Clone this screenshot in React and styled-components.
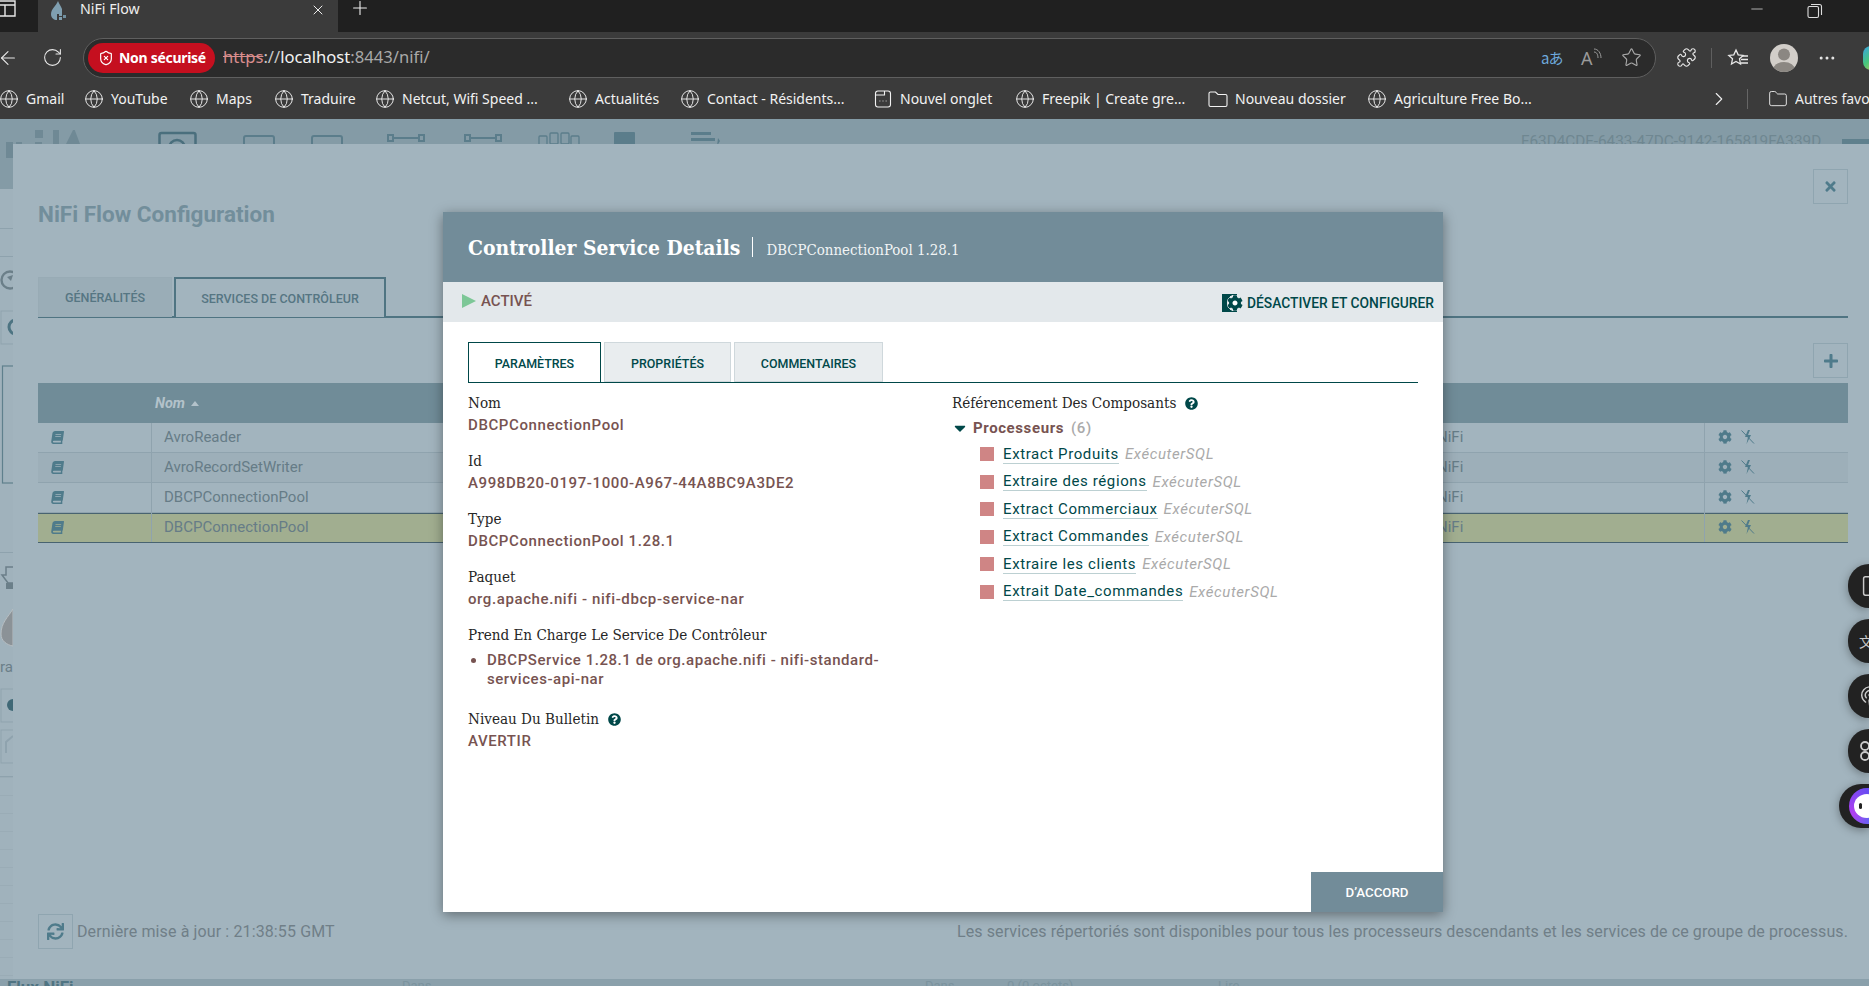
import React from 'react';
import styled, { createGlobalStyle } from 'styled-components';
import { Globe, RotateCw, ArrowLeft, X, Plus, ShieldX, Star, Puzzle, MoreHorizontal, ChevronRight, Folder, Minus, Smartphone, Podcast } from 'lucide-react';
import { FaBook, FaCog, FaPlus, FaTimes, FaSync, FaQuestionCircle, FaCaretDown } from 'react-icons/fa';

const Global = createGlobalStyle`
  html, body { margin: 0; padding: 0; height: 100%; overflow: hidden; background: #202020; }
  #root { height: 100%; }
  * { box-sizing: border-box; }
`;
const UI = `"Noto Sans", "Open Sans", sans-serif`;
const RB = `Roboto, "Liberation Sans", sans-serif`;
const SLAB = `"DejaVu Serif Condensed", "DejaVu Serif", serif`;

const Screen = styled.div`width:1869px;height:986px;display:flex;flex-direction:column;overflow:hidden;position:relative;`;

/* browser chrome */
const TabStrip = styled.div`height:32px;background:#202020;display:flex;align-items:flex-start;flex:none;overflow:hidden;`;
const WinSlot = styled.div`width:38px;height:32px;color:#e8e8e8;`;
const Tab = styled.div`width:300px;height:32px;background:#3b3b3b;display:flex;align-items:center;padding:0 12px;color:#fff;font:14.2px ${UI};position:relative;`;
const TabTitle = styled.span`margin:-15px 0 0 13px;flex:1;color:#eee;`;
const TabClose = styled.span`margin:-12px 0 0 0;display:flex;color:#eee;`;
const NewTab = styled.span`margin:-3px 0 0 11px;display:flex;color:#eee;`;
const WinControls = styled.div`margin-left:auto;margin-right:-12px;display:flex;align-items:flex-start;color:#ddd;`;
const WinBtn = styled.span`display:flex;margin-left:${p => p.$ml}px;`;

const Toolbar = styled.div`height:46px;background:#3b3b3b;display:flex;align-items:center;flex:none;padding-top:5px;`;
const NavBtn = styled.span`display:flex;flex:none;color:#e8e8e8;margin-left:${p => p.$ml}px;`;
const AddressBar = styled.div`width:1573px;flex:none;height:40px;margin-left:20px;border:1.5px solid #5f5f5f;border-radius:20px;background:#2b2b2b;display:flex;align-items:center;padding:0 13px 0 4px;`;
const Badge = styled.div`width:127px;height:30px;border-radius:15px;background:#c50f1f;color:#fff;display:flex;align-items:center;gap:5px;padding-left:10px;font:700 14px ${UI};letter-spacing:-.3px;white-space:nowrap;`;
const Url = styled.div`margin:-2px 0 0 8px;font:16.6px ${UI};color:#a9a9a9;flex:1;white-space:nowrap;`;
const UrlHttps = styled.span`color:#d98d8d;text-decoration:line-through;`;
const UrlHost = styled.span`color:#f2f2f2;`;
const UrlSep = styled.span`color:#c8c8c8;`;
const FieldIcons = styled.div`display:flex;align-items:center;gap:18px;color:#a8a8a8;`;
const Translate = styled.span`width:22px;color:#6ea9dc;font:15px "Noto Sans CJK JP", "Noto Sans", sans-serif;white-space:nowrap;letter-spacing:-1px;`;
const ReadAloud = styled.span`width:22px;height:22px;display:flex;align-items:flex-end;position:relative;font:18px ${UI};line-height:22px;color:#9a9a9a;`;
const ReadArc = styled.svg`position:absolute;right:0;top:1px;`;
const VSep = styled.span`width:1px;height:20px;flex:none;background:#5f5f5f;margin-left:${p => p.$ml}px;`;
const Avatar = styled.span`width:28px;height:28px;flex:none;border-radius:50%;background:#d2cec9;display:flex;margin-left:21px;overflow:hidden;`;
const Copilot = styled.span`width:22px;height:24px;flex:none;margin-left:26px;border-radius:8px 0 0 8px;background:linear-gradient(135deg,#38a3e8 0%,#48c87a 45%,#f2c14e 90%);`;

const Bookmarks = styled.div`height:41px;background:#3b3b3b;display:flex;align-items:center;flex:none;padding-left:0;margin-left:-1px;`;
const Bookmark = styled.div`width:${p => p.$w}px;flex:none;display:flex;align-items:center;gap:7px;color:#f2f2f2;font:14px ${UI};white-space:nowrap;`;
const BookEnd = styled.div`margin-left:auto;display:flex;align-items:center;color:#eee;`;
const Chevron = styled.span`display:flex;margin-right:17px;`;
const BarSep = styled.span`width:1px;height:20px;background:#666;margin-right:20px;`;
const FavText = styled.span`font:14px ${UI};margin-left:7px;white-space:nowrap;width:74px;overflow:hidden;`;

/* nifi page behind */
const Page = styled.div`flex:1;position:relative;background:#a0b2bc;overflow:hidden;display:flex;flex-direction:column;`;
const NifiHeader = styled.div`height:70px;background:#849ba6;display:flex;align-items:flex-start;flex:none;padding-top:11px;color:#5b7d8b;position:relative;`;
const HeadIcon = styled.span`margin-left:${p => p.$ml}px;display:flex;`;
const FlowId = styled.span`position:absolute;left:1521px;top:13px;font:15.3px Roboto, sans-serif;color:#6f8791;white-space:nowrap;`;
const UserTab = styled.span`position:absolute;right:0;top:20px;width:27px;height:10px;background:#5f808d;`;
const SideStack = styled.div`width:13px;flex:1;display:flex;flex-direction:column;color:#4d7482;`;
const SidePiece = styled.div`height:${p => p.$h}px;flex:none;background:${p => p.$bg || 'transparent'};border-bottom:${p => p.$line ? '1px solid #8ea2ad' : 'none'};overflow:hidden;display:flex;align-items:center;font:15px ${RB};color:#6b7f89;`;
const SideGrid = styled.div`flex:1;background-image:linear-gradient(#9aacb6 1px,transparent 1px);background-size:100% 18px;`;
const BottomBar = styled.div`height:7px;background:#8aa0ab;flex:none;padding-left:7px;font:700 17px/17px ${RB};color:#4f7482;overflow:hidden;white-space:nowrap;display:flex;`;
const BarStat = styled.span`position:absolute;bottom:-8px;left:${p => p.$x}px;font:13px/16px ${RB};color:#7b939e;`;

/* NiFi configuration shell */
const Shell = styled.div`position:absolute;left:13px;top:25px;right:0;bottom:7px;background:#a2b4be;padding:0 21px 30px 25px;display:flex;flex-direction:column;font-family:${RB};`;
const SquareBtn = styled.button`width:35px;height:35px;padding:0;background:transparent;border:1px solid #8fa5b0;color:#4f7b8b;display:flex;align-items:center;justify-content:center;flex:none;`;
const CloseBtn = styled(SquareBtn)`position:absolute;top:25px;right:21px;`;
const ShellTitle = styled.h1`margin:57px 0 0;font:700 22.5px/26px ${RB};color:#728e9b;`;
const ShellTabs = styled.div`margin-top:50px;height:41px;display:flex;gap:2px;border-bottom:2px solid #4f7482;flex:none;`;
const ShellTab = styled.div`width:${p => p.$w}px;height:40px;margin-bottom:-1px;padding-top:1px;display:flex;align-items:center;justify-content:center;font:500 12.5px ${RB};color:#567683;border:${p => p.$active ? '2px solid #4f7482' : '1px solid #98abb5'};border-bottom:${p => p.$active ? 'none' : '1px solid #98abb5'};background:${p => p.$active ? '#a2b4be' : '#9aadb7'};`;
const AddBtn = styled(SquareBtn)`align-self:flex-end;margin-top:25px;`;
const Table = styled.div`margin-top:5px;display:flex;flex-direction:column;flex:none;`;
const THead = styled.div`height:40px;background:#708c98;padding-left:117px;display:flex;align-items:center;font:italic 700 14.5px ${RB};color:#b3c2ca;gap:6px;`;
const SortUp = styled.span`width:0;height:0;border-left:4.5px solid transparent;border-right:4.5px solid transparent;border-bottom:5px solid #b3c2ca;`;
const TRow = styled.div`height:30px;display:grid;grid-template-columns:113px 1fr 280px 144px;background:${p => p.$sel ? '#a1ae90' : p.$alt ? '#9dafb9' : '#a2b4be'};border-bottom:1px solid ${p => p.$sel ? '#486370' : '#8fa3ae'};${p => p.$sel ? 'box-shadow:inset 0 1px 0 #486370;' : ''}`;
const TCell = styled.div`display:flex;align-items:center;padding:0 0 1px ${p => p.$pl ?? 12}px;gap:8px;font-size:15px;color:#667c87;border-left:${p => p.$rule ? '1px solid #8fa3ae' : 'none'};`;
const ShellFoot = styled.div`margin-top:auto;display:flex;align-items:center;`;
const RefreshLabel = styled.span`margin-left:4px;font-size:16px;color:#707f88;letter-spacing:.12px;`;
const FootNote = styled.span`margin-left:auto;font-size:16px;color:#707f88;letter-spacing:.1px;`;

/* modal */
const Modal = styled.div`position:absolute;left:443px;top:93px;width:1000px;height:700px;background:#fff;box-shadow:0 3px 12px rgba(0,0,0,.4);display:flex;flex-direction:column;font-family:${RB};`;
const ModalHead = styled.div`height:70px;background:#728c99;display:flex;align-items:center;padding-left:25px;color:#fff;flex:none;`;
const ModalTitle = styled.h2`margin:0;font:700 20.9px ${SLAB};padding-right:12px;`;
const HeadRule = styled.span`width:1px;height:20px;background:#fff;`;
const ModalSub = styled.span`margin-left:13px;font:14.9px ${SLAB};padding-top:6px;color:#f1f4f5;`;
const StatusBar = styled.div`height:40px;background:#e3e8eb;display:flex;justify-content:space-between;padding:0 9px 0 19px;flex:none;`;
const StatusLeft = styled.div`display:flex;align-items:center;gap:5px;font:500 15px ${RB};color:#775351;padding-bottom:2px;`;
const PlayMark = styled.span`width:0;height:0;border-left:14px solid #7dc797;border-top:7.5px solid transparent;border-bottom:7.5px solid transparent;`;
const StatusRight = styled.div`display:flex;align-items:center;gap:4px;font:500 13.8px ${RB};color:#004849;padding-top:1px;`;
const GearBox = styled.span`width:21px;height:18px;display:flex;align-items:center;justify-content:flex-end;color:#004849;background:radial-gradient(circle at 13px 9px,#fff 3.5px,#e3e8eb 4px,#e3e8eb 8px,transparent 8.5px),linear-gradient(#004849,#004849) left/15px 100% no-repeat;`;
const ModalBody = styled.div`flex:1;padding:20px 25px 0;display:flex;flex-direction:column;`;
const Tabs = styled.div`height:41px;display:flex;gap:3px;border-bottom:1px solid #004849;flex:none;`;
const TabBtn = styled.div`width:${p => p.$w}px;height:40px;padding-top:2px;display:flex;align-items:center;justify-content:center;font:500 12.45px ${RB};color:#004849;background:${p => p.$active ? '#fff' : '#e9edef'};border:${p => p.$active ? '1px solid #004849' : '1px solid #cfd8dc'};border-bottom:${p => p.$active ? '0' : '1px solid #cfd8dc'};`;
const Cols = styled.div`display:flex;padding-top:9px;`;
const LeftCol = styled.div`width:484px;flex:none;`;
const RightCol = styled.div`flex:1;`;
const Field = styled.div`margin-bottom:${p => p.$mb ?? 14}px;`;
const Label = styled.div`font:15.1px/22px ${SLAB};color:#262626;display:flex;align-items:center;gap:9px;white-space:nowrap;`;
const Value = styled.div`font:500 15px/22px ${RB};color:#775351;letter-spacing:.6px;`;
const Bullets = styled.ul`margin:5px 0 0;padding:0 0 0 19px;width:440px;font:500 15px/19px ${RB};color:#775351;letter-spacing:.55px;`;
const Help = styled.span`display:flex;color:#004849;`;
const Proc = styled.div`margin-top:3px;height:22px;display:flex;align-items:center;font:700 15px ${RB};color:#775351;letter-spacing:.6px;`;
const Caret = styled.span`display:flex;width:22px;color:#004849;margin-left:-1px;`;
const ProcCount = styled.span`margin-left:7px;font-weight:500;color:#aaa;`;
const RefList = styled.div`margin:4px 0 0 28px;display:flex;flex-direction:column;gap:5.6px;`;
const RefRow = styled.div`height:22px;display:flex;align-items:center;font-size:15px;letter-spacing:.6px;`;
const Stop = styled.span`width:14px;height:14px;background:#cf8585;flex:none;margin-right:9px;`;
const RefName = styled.span`color:#004849;border-bottom:1px solid #bcd0d2;line-height:18px;`;
const RefType = styled.span`margin-left:6px;font-style:italic;color:#aaa;`;
const ModalFoot = styled.div`display:flex;justify-content:flex-end;flex:none;`;
const OkBtn = styled.button`width:132px;height:40px;border:0;background:#728c99;color:#fff;font:500 13.3px ${RB};`;

/* floating edge buttons */
const EdgeDock = styled.div`position:absolute;right:0;top:445px;display:flex;flex-direction:column;align-items:flex-end;gap:11px;`;
const EdgeBtn = styled.div`width:${p => p.$w}px;height:44px;border-radius:22px 0 0 22px;background:#222;color:#c9c9c9;display:flex;align-items:center;padding-left:${p => p.$pl ?? 11}px;overflow:hidden;box-shadow:0 2px 10px rgba(0,0,0,.35);font:14px "Noto Sans CJK SC", sans-serif;flex:none;`;
const EdgeGlyph = styled.span`flex:none;display:flex;`;
const Mascot = styled.span`flex:none;width:36px;height:36px;border-radius:50%;background:conic-gradient(#6a4cf2,#2f7bf5,#b03ff0,#6a4cf2);display:flex;align-items:center;justify-content:center;`;
const MascotFace = styled.span`width:26px;height:24px;border-radius:50%;background:#fff;display:flex;align-items:center;justify-content:flex-start;gap:7px;padding-left:5px;`;
const Eye = styled.span`width:3px;height:6px;border-radius:2px;background:#222;`;

const Bolt = () => (
  <svg width="15" height="16" viewBox="0 0 15 16"><path d="M8 1 5 8h3l-1.5 7L11 6H8l2-5z" fill="#4f7b8b" /><path d="M1.5 1.5 14 14.5" stroke="#4f7b8b" strokeWidth="1" /></svg>
);
const HIcon = ({ d }) => (
  <svg width="42" height="26" viewBox="0 0 42 26" fill="none" stroke="currentColor" strokeWidth="2"><path d={d} /></svg>
);

const books = [
  ['Gmail', 85], ['YouTube', 105], ['Maps', 85], ['Traduire', 101], ['Netcut, Wifi Speed ...', 193], ['Actualités', 112],
  ['Contact - Résidents...', 193], ['Nouvel onglet', 142, 'tab'], ['Freepik | Create gre...', 193], ['Nouveau dossier', 159, 'folder'], ['Agriculture Free Bo...', 300],
];
const services = [['AvroReader'], ['AvroRecordSetWriter', 'alt'], ['DBCPConnectionPool'], ['DBCPConnectionPool', 'sel']];
const refs = ['Extract Produits', 'Extraire des régions', 'Extract Commerciaux', 'Extract Commandes', 'Extraire les clients', 'Extrait Date_commandes'];

export default function App() {
  return (
    <Screen>
      <Global />
      <TabStrip>
        <WinSlot>
          <svg width="17" height="18" viewBox="0 0 17 18" fill="none" stroke="currentColor" strokeWidth="1.4"><path d="M-1 1h16v15H-1zM-1 5h16M5 5v11" /></svg>
        </WinSlot>
        <Tab>
          <svg width="17" height="20" viewBox="0 0 17 20" style={{ marginTop: -10 }}><path d="M8 0C6 5 1 8 1 13c0 4 3 6 6 6V13h5V8C11 5 9 3 8 0z" fill="#7f9fb0" /><rect x="9" y="12" width="3" height="3" fill="#7f9fb0" /><rect x="13" y="14" width="3" height="3" fill="#6f8f9f" /><rect x="9" y="16" width="3" height="3" fill="#7f9fb0" /></svg>
          <TabTitle>NiFi Flow</TabTitle>
          <TabClose><X size={16} strokeWidth={1.5} /></TabClose>
        </Tab>
        <NewTab><Plus size={22} strokeWidth={1.2} /></NewTab>
        <WinControls>
          <WinBtn $ml={0}><Minus size={18} strokeWidth={1} /></WinBtn>
          <WinBtn $ml={41}>
            <svg width="16" height="16" viewBox="0 0 16 16" fill="none" stroke="currentColor" strokeWidth="1.1" style={{ marginTop: 3 }}><rect x="1" y="3.5" width="10.5" height="11" rx="1.5" /><path d="M4 1.5h8.5a2 2 0 0 1 2 2V12" /></svg>
          </WinBtn>
          <WinBtn $ml={44}><X size={14} strokeWidth={1} style={{ marginTop: 3 }} /></WinBtn>
        </WinControls>
      </TabStrip>

      <Toolbar>
        <NavBtn $ml={-3}><ArrowLeft size={22} strokeWidth={1.2} /></NavBtn>
        <NavBtn $ml={23}><RotateCw size={21} strokeWidth={1.2} /></NavBtn>
        <AddressBar>
          <Badge><ShieldX size={16} strokeWidth={1.8} />Non sécurisé</Badge>
          <Url><UrlHttps>https</UrlHttps><UrlSep>://</UrlSep><UrlHost>localhost</UrlHost>:8443/nifi/</Url>
          <FieldIcons>
            <Translate>aあ</Translate>
            <ReadAloud>A<ReadArc width="10" height="12" viewBox="0 0 10 12" fill="none" stroke="currentColor" strokeWidth="1"><path d="M1 1c4 0 7 4 7 9M1 4c3 0 4 3 4 6" /></ReadArc></ReadAloud>
            <Star size={21} strokeWidth={1.3} />
          </FieldIcons>
        </AddressBar>
        <NavBtn $ml={20}><Puzzle size={21} strokeWidth={1.3} /></NavBtn>
        <VSep $ml={14} />
        <NavBtn $ml={15}>
          <svg width="22" height="20" viewBox="0 0 22 20" fill="none" stroke="currentColor" strokeWidth="1.3"><path d="M9 2l2.2 4.8 5 .6-3.7 3.4 1 5.2L9 13.4 4.5 16l1-5.2L1.8 7.4l5-.6z" /><path d="M15 8h6M14 11.5h7M14 15h7" /></svg>
        </NavBtn>
        <Avatar>
          <svg width="28" height="28" viewBox="0 0 28 28"><circle cx="14" cy="10.5" r="6" fill="#8b8782" /><ellipse cx="14" cy="26" rx="11" ry="8" fill="#8b8782" /></svg>
        </Avatar>
        <NavBtn $ml={19}><MoreHorizontal size={20} strokeWidth={1.6} /></NavBtn>
        <Copilot />
      </Toolbar>

      <Bookmarks>
        {books.map(([t, w, k]) => (
          <Bookmark key={t + w} $w={w}>
            {k === 'tab' ? (
              <svg width="20" height="20" viewBox="0 0 20 20" fill="none" stroke="currentColor" strokeWidth="1.1"><rect x="2.5" y="2" width="15" height="16" rx="2.5" /><path d="M2.5 6h9V2M6.5 12h.8M9.6 12h.8M12.7 12h.8" /></svg>
            ) : k === 'folder' ? (
              <svg width="20" height="20" viewBox="0 0 20 20" fill="none" stroke="currentColor" strokeWidth="1.1"><path d="M1 4.5A1.5 1.5 0 0 1 2.5 3h5L10 5.5h7.5A1.5 1.5 0 0 1 19 7v9a1.5 1.5 0 0 1-1.5 1.5h-15A1.5 1.5 0 0 1 1 16z" /></svg>
            ) : <Globe size={20} strokeWidth={1.1} />}
            {t}
          </Bookmark>
        ))}
        <BookEnd>
          <Chevron><ChevronRight size={22} strokeWidth={1.2} /></Chevron>
          <BarSep />
          <Folder size={20} strokeWidth={1.1} />
          <FavText>Autres favoris</FavText>
        </BookEnd>
      </Bookmarks>

      <Page>
        <NifiHeader>
          <HeadIcon $ml={6}>
            <svg width="74" height="28" viewBox="0 0 74 28" fill="#6f8995"><rect x="0" y="12" width="7" height="16" /><rect x="10" y="12" width="6" height="16" /><rect x="29" y="0" width="8" height="8" /><rect x="29" y="12" width="7" height="16" /><rect x="47" y="0" width="6" height="16" /><path d="M60 14 L68 -2 L74 14z" /></svg>
          </HeadIcon>
          <HeadIcon $ml={78}><svg width="40" height="26" viewBox="0 0 40 26" fill="none" stroke="#4a6f7d" strokeWidth="2.5"><rect x="1.5" y="3" width="36" height="30" rx="2" /><circle cx="19" cy="18" r="8" /></svg></HeadIcon>
          <HeadIcon $ml={42}><HIcon d="M4 22V8a2 2 0 0 1 2-2h26a2 2 0 0 1 2 2v14" /></HeadIcon>
          <HeadIcon $ml={26}><HIcon d="M4 22V8a2 2 0 0 1 2-2h26a2 2 0 0 1 2 2v14" /></HeadIcon>
          <HeadIcon $ml={35}><HIcon d="M3 5h5v6H3zM34 5h5v6h-5zM8 8h26M8 16h18" /></HeadIcon>
          <HeadIcon $ml={35}><HIcon d="M3 5h5v6H3zM34 5h5v6h-5zM8 8h26M8 16h18" /></HeadIcon>
          <HeadIcon $ml={34}><svg width="42" height="26" viewBox="0 0 42 26" fill="none" stroke="currentColor" strokeWidth="1.3"><rect x="1" y="6" width="8" height="10" rx="1" /><rect x="12" y="3" width="8" height="11" rx="1" /><rect x="23" y="3" width="8" height="11" rx="1" /><rect x="33" y="6" width="8" height="10" rx="1" /></svg></HeadIcon>
          <HeadIcon $ml={33}><svg width="24" height="26" viewBox="0 0 24 26" fill="currentColor"><rect x="1" y="2" width="21" height="14" rx="1" /></svg></HeadIcon>
          <HeadIcon $ml={54}><svg width="30" height="26" viewBox="0 0 30 26" fill="currentColor"><rect x="0" y="2" width="20" height="3" /><rect x="0" y="8" width="24" height="3" /><path d="M27 8l2 3-3 5z" /></svg></HeadIcon>
          <FlowId>F63D4CDF-6433-47DC-9142-165819FA339D</FlowId>
          <UserTab />
        </NifiHeader>
        <SideStack>
          <SidePiece $h={40} $line />
          <SidePiece $h={28} $line />
          <SidePiece $h={45}>
            <svg width="13" height="22" viewBox="0 0 13 22" fill="none" stroke="currentColor" strokeWidth="2.4"><circle cx="10" cy="11" r="8.5" /><path d="M7 8l6-2-2 6z" fill="currentColor" stroke="none" /></svg>
          </SidePiece>
          <SidePiece $h={8} />
          <SidePiece $h={35}>
            <svg width="13" height="35" viewBox="0 0 13 35" fill="none"><rect x="1" y="1" width="20" height="33" stroke="#8fa3ae" /><circle cx="16" cy="17" r="7" stroke="#4d7482" strokeWidth="3" /></svg>
          </SidePiece>
          <SidePiece $h={20} />
          <SidePiece $h={119}>
            <svg width="13" height="119" viewBox="0 0 13 119" fill="none"><rect x="2.5" y="1" width="20" height="117" stroke="#5f808d" strokeWidth="1.2" /></svg>
          </SidePiece>
          <SidePiece $h={69} $line />
          <SidePiece $h={50}>
            <svg width="13" height="30" viewBox="0 0 13 30" fill="none" stroke="currentColor" strokeWidth="1.5"><path d="M13 4H6v8H2l6 8h5" /><path d="M6 20h7v6H6z" fill="currentColor" stroke="none" /></svg>
          </SidePiece>
          <SidePiece $h={50}>
            <svg width="13" height="38" viewBox="0 0 13 38"><path d="M13 0C8 8 1 14 1 25c0 7 6 11 12 12z" fill="#8b9297" stroke="#b7bec2" strokeWidth="1" /></svg>
          </SidePiece>
          <SidePiece $h={28}>ra</SidePiece>
          <SidePiece $h={7} />
          <SidePiece $h={35}>
            <svg width="13" height="35" viewBox="0 0 13 35" fill="none"><rect x="1" y="1" width="20" height="33" stroke="#8fa3ae" /><circle cx="13" cy="17" r="6" fill="#3f6876" /></svg>
          </SidePiece>
          <SidePiece $h={6} />
          <SidePiece $h={35}>
            <svg width="13" height="35" viewBox="0 0 13 35" fill="none"><rect x="1" y="1" width="20" height="33" stroke="#8fa3ae" /><path d="M6 24V13l7-6" stroke="#8fa3ae" strokeWidth="2" /></svg>
          </SidePiece>
          <SidePiece $h={13} $line />
          <SideGrid />
        </SideStack>
        <BottomBar>
          Flux NiFi
          <BarStat $x={402}>Dans</BarStat>
          <BarStat $x={925}>Dans</BarStat>
          <BarStat $x={1007}>0 (0 octets)</BarStat>
          <BarStat $x={1218}>Lire</BarStat>
        </BottomBar>

        <Shell>
          <CloseBtn><FaTimes size={15} /></CloseBtn>
          <ShellTitle>NiFi Flow Configuration</ShellTitle>
          <ShellTabs>
            <ShellTab $w={134}>GÉNÉRALITÉS</ShellTab>
            <ShellTab $w={212} $active>SERVICES DE CONTRÔLEUR</ShellTab>
          </ShellTabs>
          <AddBtn><FaPlus size={16} /></AddBtn>
          <Table>
            <THead>Nom<SortUp /></THead>
            {services.map(([name, kind], i) => (
              <TRow key={i} $alt={kind === 'alt'} $sel={kind === 'sel'}>
                <TCell $pl={13}><FaBook size={13} color="#4f7b8b" style={{ transform: 'skewX(-8deg)' }} /></TCell>
                <TCell $rule>{name}</TCell>
                <TCell $pl={13}>NiFi</TCell>
                <TCell $rule $pl={13}><FaCog size={14} color="#4f7b8b" /><Bolt /></TCell>
              </TRow>
            ))}
          </Table>
          <ShellFoot>
            <SquareBtn><FaSync size={17} /></SquareBtn>
            <RefreshLabel>Dernière mise à jour : 21:38:55 GMT</RefreshLabel>
            <FootNote>Les services répertoriés sont disponibles pour tous les processeurs descendants et les services de ce groupe de processus.</FootNote>
          </ShellFoot>
        </Shell>

        <Modal>
          <ModalHead>
            <ModalTitle>Controller Service Details</ModalTitle>
            <HeadRule />
            <ModalSub>DBCPConnectionPool 1.28.1</ModalSub>
          </ModalHead>
          <StatusBar>
            <StatusLeft><PlayMark />ACTIVÉ</StatusLeft>
            <StatusRight>
              <GearBox><FaCog size={16} /></GearBox>
              DÉSACTIVER ET CONFIGURER
            </StatusRight>
          </StatusBar>
          <ModalBody>
            <Tabs>
              <TabBtn $w={133} $active>PARAMÈTRES</TabBtn>
              <TabBtn $w={127}>PROPRIÉTÉS</TabBtn>
              <TabBtn $w={149}>COMMENTAIRES</TabBtn>
            </Tabs>
            <Cols>
              <LeftCol>
                <Field><Label>Nom</Label><Value>DBCPConnectionPool</Value></Field>
                <Field><Label>Id</Label><Value>A998DB20-0197-1000-A967-44A8BC9A3DE2</Value></Field>
                <Field><Label>Type</Label><Value>DBCPConnectionPool 1.28.1</Value></Field>
                <Field><Label>Paquet</Label><Value>org.apache.nifi - nifi-dbcp-service-nar</Value></Field>
                <Field $mb={19}>
                  <Label>Prend En Charge Le Service De Contrôleur</Label>
                  <Bullets><li>DBCPService 1.28.1 de org.apache.nifi - nifi-standard-services-api-nar</li></Bullets>
                </Field>
                <Field>
                  <Label>Niveau Du Bulletin <Help><FaQuestionCircle size={13} /></Help></Label>
                  <Value>AVERTIR</Value>
                </Field>
              </LeftCol>
              <RightCol>
                <Label>Référencement Des Composants <Help><FaQuestionCircle size={13} /></Help></Label>
                <Proc><Caret><FaCaretDown size={18} /></Caret>Processeurs<ProcCount>(6)</ProcCount></Proc>
                <RefList>
                  {refs.map(r => (
                    <RefRow key={r}><Stop /><RefName>{r}</RefName><RefType>ExécuterSQL</RefType></RefRow>
                  ))}
                </RefList>
              </RightCol>
            </Cols>
          </ModalBody>
          <ModalFoot><OkBtn>D’ACCORD</OkBtn></ModalFoot>
        </Modal>

        <EdgeDock>
          <EdgeBtn $w={21}><EdgeGlyph><Smartphone size={22} strokeWidth={1.6} /></EdgeGlyph></EdgeBtn>
          <EdgeBtn $w={21}><EdgeGlyph>文</EdgeGlyph></EdgeBtn>
          <EdgeBtn $w={21}><EdgeGlyph><Podcast size={22} strokeWidth={1.6} /></EdgeGlyph></EdgeBtn>
          <EdgeBtn $w={21}>
            <EdgeGlyph><svg width="22" height="22" viewBox="0 0 22 22" fill="none" stroke="currentColor" strokeWidth="1.8"><circle cx="6" cy="6" r="4" /><circle cx="6" cy="16" r="4" /><path d="M10 11h10" /></svg></EdgeGlyph>
          </EdgeBtn>
          <EdgeBtn $w={30} $pl={10}><Mascot><MascotFace><Eye /><Eye /></MascotFace></Mascot></EdgeBtn>
        </EdgeDock>
      </Page>
    </Screen>
  );
}
